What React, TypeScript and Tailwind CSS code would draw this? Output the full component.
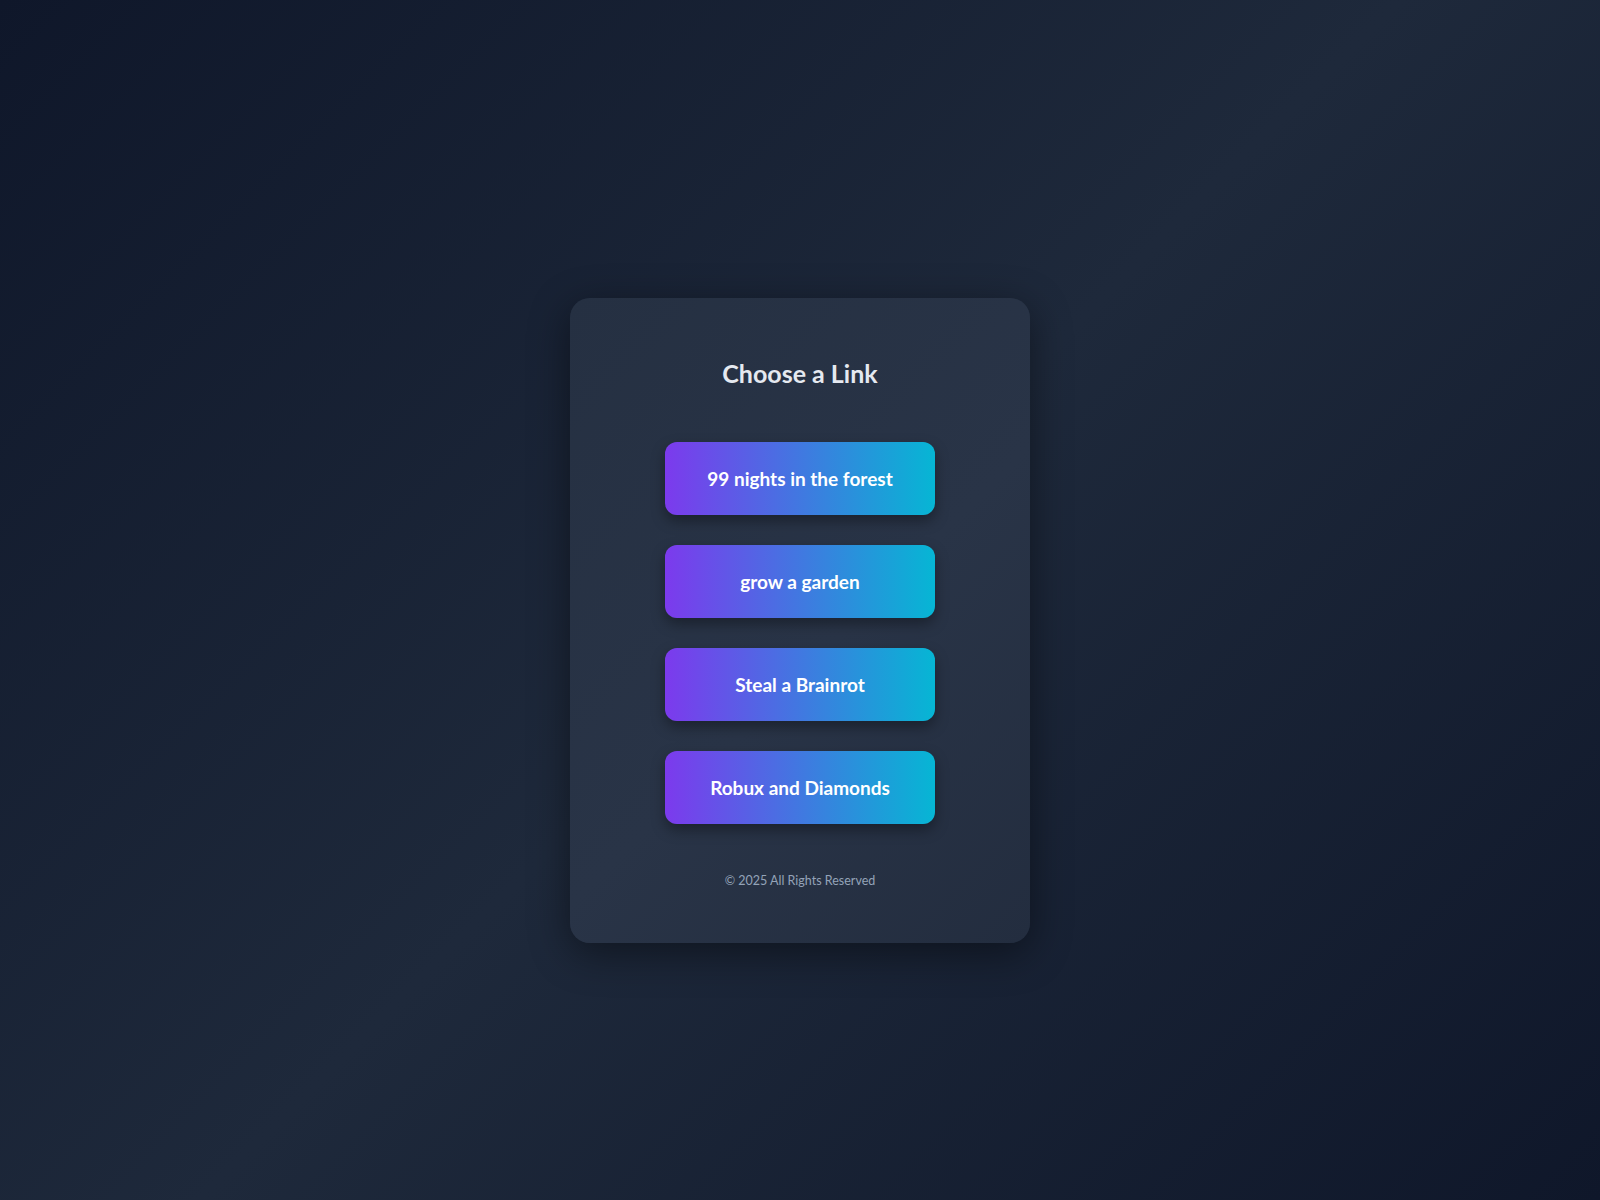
const links = ['99 nights in the forest', 'grow a garden', 'Steal a Brainrot', 'Robux and Diamonds'];

export default function App() {
  return (
    <div
      className="min-h-screen flex items-center justify-center pt-[41px] bg-[linear-gradient(135deg,#0f172a_0%,#1e293b_50%,#0f172a_100%)]"
      style={{ fontFamily: 'Lato, "Noto Sans", sans-serif' }}
    >
      <div className="w-[460px] rounded-[20px] bg-[linear-gradient(135deg,#253042,#293447_55%,#232d3f)] pt-[57px] pb-[52px] flex flex-col items-center shadow-[0_10px_40px_rgba(0,0,0,0.45)]">
        <h1 className="text-[25px] leading-[36px] font-bold text-[#e5e9f0]">Choose a Link</h1>
        <div className="mt-[51px] flex flex-col gap-[30px]">
          {links.map((label) => (
            <a
              key={label}
              href="#"
              className="w-[270px] h-[73px] pt-[2px] rounded-[12px] flex items-center justify-center text-[19px] font-bold text-white bg-[linear-gradient(90deg,#7c3aed,#06b6d4)] shadow-[0_6px_14px_rgba(0,0,0,0.35)]"
            >
              {label}
            </a>
          ))}
        </div>
        <p className="mt-[47px] text-[12.5px] leading-[20px] text-[#94a3b8]">© 2025 All Rights Reserved</p>
      </div>
    </div>
  );
}
